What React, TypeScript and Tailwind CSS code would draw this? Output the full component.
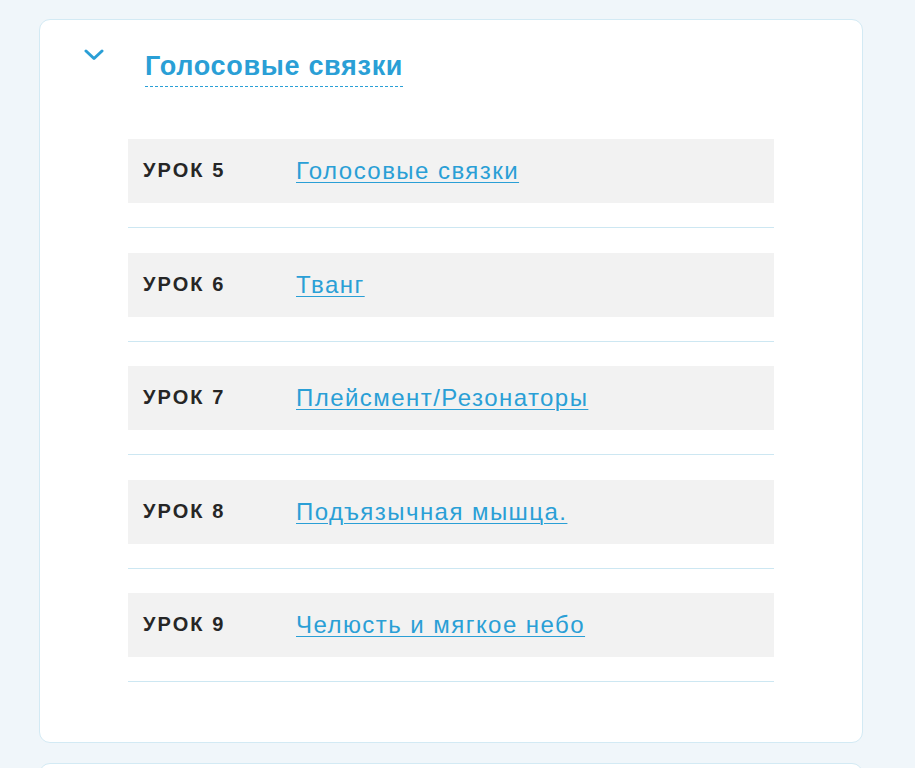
const lessons = [
  { n: 5, title: 'Голосовые связки' },
  { n: 6, title: 'Тванг' },
  { n: 7, title: 'Плейсмент/Резонаторы' },
  { n: 8, title: 'Подъязычная мышца.' },
  { n: 9, title: 'Челюсть и мягкое небо' },
]

function Chevron() {
  return (
    <svg width="20" height="12" viewBox="0 0 20 12" className="mt-[3px]">
      <path d="M2 2 L10 9.5 L18 2" fill="none" stroke="#2a9fd6" strokeWidth="3" strokeLinecap="round" strokeLinejoin="round" />
    </svg>
  )
}

export default function App() {
  return (
    <div className="min-h-screen bg-[#f0f6fa] pt-[19px] pl-[39px] pr-[52px] font-['Liberation_Sans',Arial,sans-serif]">
      <section className="bg-white border border-[#d3eaf4] rounded-[11px] pt-[26px] pb-[60px]">
        <div className="flex items-start pl-[44px]">
          <Chevron />
          <h2 className="ml-[41px] text-[27px] leading-[40px] tracking-[0.7px] font-bold text-[#2a9fd6] border-b border-dashed border-[#2a9fd6]">
            Голосовые связки
          </h2>
        </div>
        <div className="mt-[52px] ml-[88px] w-[646px]">
          {lessons.map((l) => (
            <div key={l.n} className="pb-[24px] mb-[24.5px] last:mb-0 border-b border-[#cde7f2]">
              <div className="h-[64px] bg-[#f2f2f2] flex items-center pl-[15px]">
                <span className="w-[153px] text-[20px] tracking-[2.1px] font-bold text-[#262626] -mt-[2px]">УРОК {l.n}</span>
                <a href="#" className="text-[24px] tracking-[1.45px] text-[#2a9fd6] underline underline-offset-[3px] decoration-1">
                  {l.title}
                </a>
              </div>
            </div>
          ))}
        </div>
      </section>
      <section className="mt-[20px] bg-white border border-[#d3eaf4] rounded-[11px] h-[100px]" />
    </div>
  )
}
